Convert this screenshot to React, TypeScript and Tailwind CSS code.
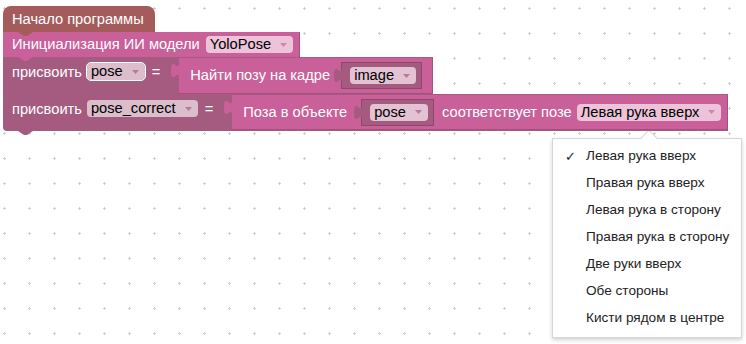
import React from "react";

const PINK = "#c9609a";
const MAUVE = "#a55b80";

const Notch = ({ color }: { color: string }) => (
    <svg className="absolute left-[15px] -bottom-[4px] z-10" width="15" height="4" viewBox="0 0 15 4">
        <path d="M0 0 L6 4 L9 4 L15 0 Z" fill={color} />
    </svg>
);

const Tab = ({ color }: { color: string }) => (
    <svg className="absolute -left-[8px] top-[5px]" width="9" height="15" viewBox="0 0 9 15">
        <path d="M9 0 H8 c0 10 -8 -8 -8 7.5 s8 -2.5 8 7.5 H9 z" fill={color} />
    </svg>
);

interface FieldProps {
    label: string;
    className: string;
    arrow: string;
}

const Field = ({ label, className, arrow }: FieldProps) => (
    <span className={`inline-flex items-center h-[17px] rounded-[4px] pl-[4px] pr-[6px] text-black ${className}`}>
        {label}
        <svg className="ml-[9px] mt-[1px]" width="7" height="5" viewBox="0 0 7 5">
            <path d="M0 0 H7 L3.5 4 Z" fill={arrow} />
        </svg>
    </span>
);

const VarSlot = ({ label, className }: { label: string; className: string }) => (
    <div className={`relative flex items-center h-[27px] bg-[#a55b80] border border-[#8c4a6b] pl-[8px] pr-[5px] ${className}`}>
        <Tab color={MAUVE} />
        <Field label={label} className="bg-[#e2c2d3]" arrow="#b57c98" />
    </div>
);

const options = [
    "Левая рука вверх",
    "Правая рука вверх",
    "Левая рука в сторону",
    "Правая рука в сторону",
    "Две руки вверх",
    "Обе стороны",
    "Кисти рядом в центре",
];

const Grid = () => (
    <svg className="absolute inset-0" width="746" height="344">
        <defs>
            <pattern id="grid" x="2" y="6" width="25" height="25" patternUnits="userSpaceOnUse">
                <rect x="1" y="2" width="3" height="1" fill="#cfcfcf" />
                <rect x="2" y="1" width="1" height="3" fill="#cfcfcf" />
            </pattern>
        </defs>
        <rect width="746" height="344" fill="url(#grid)" />
    </svg>
);

const App = () => {
    return (
        <div className="relative w-[746px] h-[344px] overflow-hidden bg-white font-['Liberation_Sans',Arial,sans-serif]">
            <Grid />

            {/* block stack */}
            <div className="absolute left-[3px] top-[6px] flex flex-col items-start text-[14.67px] text-white leading-none">
                <div className="relative z-40 flex items-center h-[26px] w-[152px] rounded-t-[8px] bg-[#a55b5b] pl-[9px]">
                    Начало программы
                    <Notch color="#a55b5b" />
                </div>

                <div className="relative z-30 flex items-center h-[25px] bg-[#c9609a] pl-[9px] pr-[6px] border-r border-[#a84d80]">
                    Инициализация ИИ модели
                    <Field label="YoloPose" className="ml-[6px] bg-[#ecc3d9]" arrow="#cf86ad" />
                    <Notch color={PINK} />
                </div>

                <div className="relative z-20 flex h-[37px] bg-[#a55b80]">
                    <div className="flex items-start pt-[6px] pl-[9px] pr-[19px]">
                        <span className="mt-[2px]">присвоить</span>
                        <Field label="pose" className="ml-[5px] bg-[#dbbdcc] outline-[1.5px] outline-white outline" arrow="#b57c98" />
                        <span className="ml-[7px] mt-[2px]">=</span>
                    </div>
                    <div className="relative flex items-center mt-[1px] h-[36px] bg-[#c9609a] pl-[11px] pr-[10px] border-r border-b border-[#a84d80]">
                        <Tab color={PINK} />
                        <span>Найти позу на кадре</span>
                        <VarSlot label="image" className="ml-[11px]" />
                    </div>
                    <Notch color={MAUVE} />
                </div>

                <div className="relative z-10 flex h-[37px] bg-[#a55b80] rounded-bl-[4px]">
                    <div className="flex items-start pt-[6px] pl-[9px] pr-[19px]">
                        <span className="mt-[2px]">присвоить</span>
                        <Field label="pose_correct" className="ml-[5px] bg-[#dbbdcc]" arrow="#b57c98" />
                        <span className="ml-[7px] mt-[2px]">=</span>
                    </div>
                    <div className="relative flex items-center mt-[1px] h-[35px] bg-[#c9609a] pl-[11px] pr-[6px] border-r border-b border-[#a84d80]">
                        <Tab color={PINK} />
                        <span>Поза в объекте</span>
                        <VarSlot label="pose" className="ml-[14px]" />
                        <span className="ml-[8px]">соответствует позе</span>
                        <Field label="Левая рука вверх" className="ml-[5px] bg-[#ecc3d9]" arrow="#cf86ad" />
                    </div>
                    <Notch color={MAUVE} />
                </div>
            </div>

            {/* dropdown menu */}
            <div className="absolute left-[552px] top-[138px] w-[190px] h-[200px] bg-white border border-[#d6d6d6] shadow-[0_2px_4px_rgba(0,0,0,0.18)] pt-[4px]">
                <div className="absolute left-[90px] -top-[7px] w-[12px] h-[12px] rotate-45 bg-white border-t border-l border-[#d6d6d6]" />
                {options.map((opt, i) => (
                    <div key={opt} className="relative flex items-center h-[27px] pl-[33px] text-[13.6px] text-[#222]">
                        {i === 0 && <span className="absolute left-[12px] text-[13px]">✓</span>}
                        {opt}
                    </div>
                ))}
            </div>
        </div>
    );
};

export default App;
